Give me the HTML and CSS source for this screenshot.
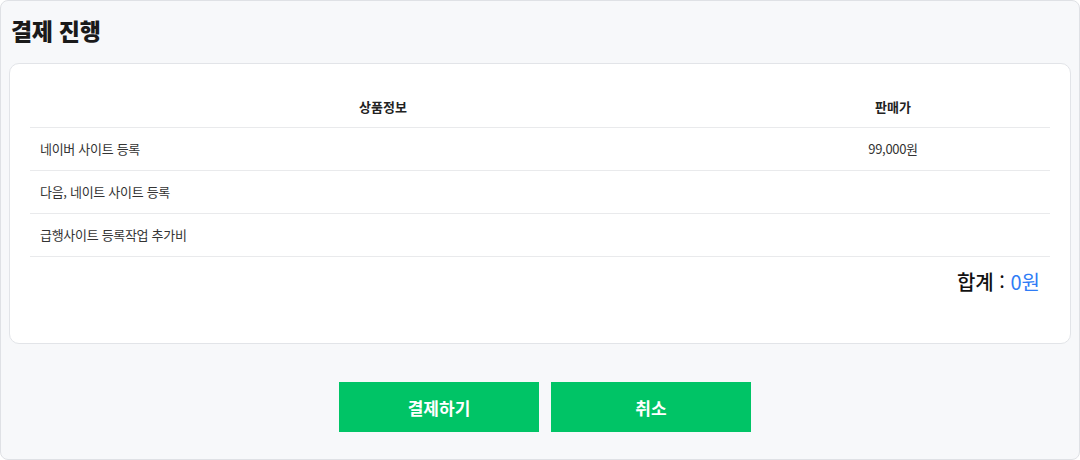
FILE: index.html
```html
<!DOCTYPE html>
<html lang="ko">
<head>
<meta charset="utf-8">
<link rel="stylesheet" href="styles.css">
</head>
<body>
<div class="panel">
  <h2 class="title">결제 진행</h2>
  <div class="card">
    <table class="order">
      <thead>
        <tr><th class="col-name">상품정보</th><th class="col-price">판매가</th></tr>
      </thead>
      <tbody>
        <tr><td>네이버 사이트 등록</td><td class="price">99,000원</td></tr>
        <tr><td>다음, 네이트 사이트 등록</td><td class="price"></td></tr>
        <tr><td>급행사이트 등록작업 추가비</td><td class="price"></td></tr>
      </tbody>
    </table>
    <div class="total"><span class="label">합계</span> : <span class="amount">0원</span></div>
  </div>
  <div class="actions">
    <button class="btn">결제하기</button>
    <button class="btn">취소</button>
  </div>
</div>
</body>
</html>
```

FILE: styles.css
```css
html, body {
  margin: 0;
  padding: 0;
  background: #ffffff;
}
body {
  font-family: "Noto Sans CJK KR", "Noto Sans", sans-serif;
  color: #222;
}
.panel {
  box-sizing: border-box;
  width: 1080px;
  height: 460px;
  background: #f7f8fa;
  border: 1px solid #dfe1e5;
  border-radius: 8px;
  padding: 0 8px;
}
.title {
  margin: 0;
  padding: 13px 0 0 2px;
  height: 48px;
  box-sizing: border-box;
  font-size: 23px;
  font-weight: 900;
  line-height: 32px;
  color: #1a1a1a;
  letter-spacing: -0.3px;
}
.card {
  margin-top: 14px;
  background: #fff;
  border: 1px solid #e2e4e8;
  border-radius: 10px;
  padding: 20px 20px 0 20px;
  height: 281px;
  box-sizing: border-box;
}
.order {
  width: 100%;
  border-collapse: collapse;
  font-size: 13px;
}
.order th {
  height: 43px;
  font-weight: 700;
  font-size: 13px;
  color: #222;
  border-bottom: 1px solid #e9eaec;
  padding: 0;
  vertical-align: middle;
  padding-top: 3px;
  box-sizing: border-box;
}
.col-name { width: 706px; }
.order td {
  height: 43px;
  box-sizing: border-box;
  border-bottom: 1px solid #e9eaec;
  padding: 0 0 0 10px;
  color: #333;
  letter-spacing: -0.3px;
  vertical-align: middle;
}
.order td.price {
  text-align: center;
  padding: 0;
}
.total {
  text-align: right;
  padding: 9px 10px 0 0;
  font-size: 20px;
  font-weight: 400;
  color: #111;
  line-height: 32px;
}
.label { font-weight: 500; }
.amount { color: #2f7cf6; }
.actions {
  display: flex;
  justify-content: center;
  gap: 12px;
  padding: 38px 0 0 10px;
}
.btn {
  width: 200px;
  height: 50px;
  border: none;
  background: #00c466;
  color: #fff;
  font-family: inherit;
  font-size: 17px;
  font-weight: 700;
  cursor: pointer;
}
```
